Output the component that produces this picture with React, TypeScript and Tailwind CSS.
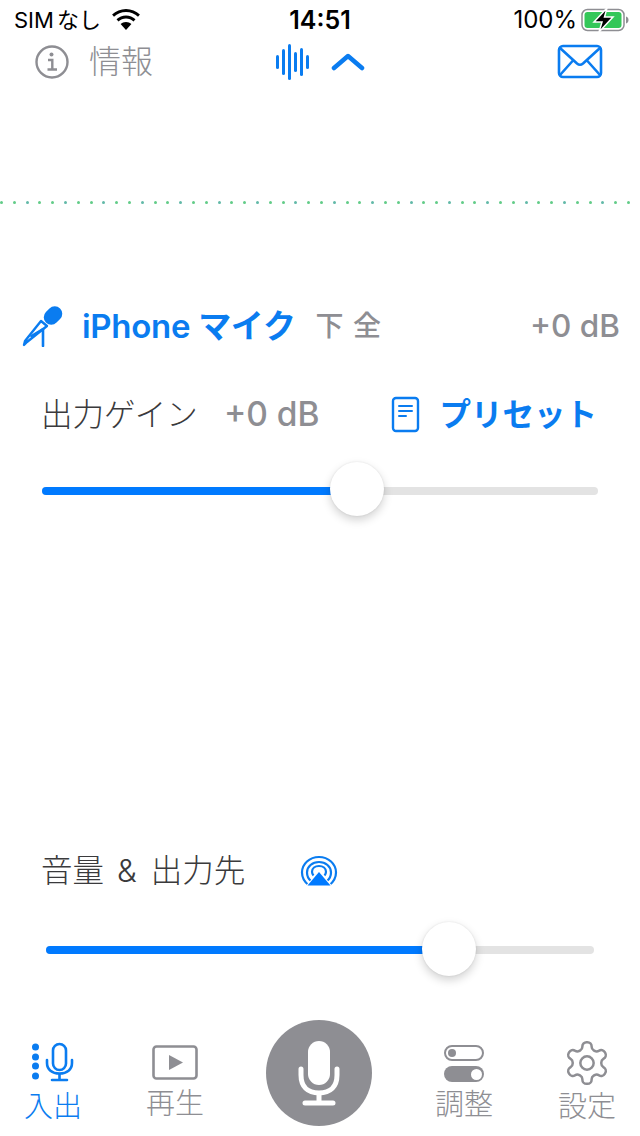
const jp = "font-['Inter','Noto_Sans_CJK_JP',sans-serif]";

function Wifi() {
  return (
    <svg width="30" height="22" viewBox="0 0 30 22" className="fill-black">
      <path d="M15 3c4.600 0 8.800 1.800 12 4.700l1.900-2.100C25.200 2.200 20.300 0 15 0S4.800 2.200 1.100 5.600L3 7.700C6.200 4.800 10.400 3 15 3z" />
      <path d="M15 9.500c2.900 0 5.500 1.100 7.500 2.900l2-2.200C21.900 7.800 18.600 6.400 15 6.400S8.100 7.800 5.500 10.200l2 2.200c2-1.800 4.600-2.900 7.500-2.900z" />
      <path d="M15 13c-2.100 0-4 .8-5.400 2.100L15 21l5.400-5.900C19 13.800 17.100 13 15 13z" />
    </svg>
  );
}

function Battery() {
  return (
    <svg width="48" height="24" viewBox="0 0 48 24" fill="none">
      <rect x="1" y="1.500" width="42" height="21" rx="5.500" stroke="#8e8e93" strokeWidth="1.500" />
      <rect x="3.500" y="4" width="37" height="16" rx="3" fill="#34c759" />
      <path d="M45 8.500c1.600.5 2.500 1.800 2.500 3.500s-.9 3-2.500 3.500z" fill="#8e8e93" />
      <path d="M26 0L13 14h8l-3 10 14-15h-8.500z" fill="#000" stroke="#fff" strokeWidth="1.500" />
    </svg>
  );
}

function Info() {
  return (
    <svg width="36" height="36" viewBox="0 0 36 36" fill="none" stroke="#8e8e93">
      <circle cx="18" cy="18" r="15.500" strokeWidth="2.400" />
      <circle cx="17.500" cy="10.500" r="2" fill="#8e8e93" stroke="none" />
      <path d="M14 16h4.300v9.500M13.500 25.500h9.500" strokeWidth="2.400" />
    </svg>
  );
}

function Waveform() {
  const bars = [14, 26, 36, 20, 28, 14];
  return (
    <div className="flex items-center gap-[3px] h-[38px]">
      {bars.map((h, i) => (
        <div key={i} className="w-[3px] rounded-full bg-[#0a7cf0]" style={{ height: h }} />
      ))}
    </div>
  );
}

function Chevron() {
  return (
    <svg width="34" height="22" viewBox="0 0 34 22" fill="none" stroke="#0a7cf0" strokeWidth="4.500" strokeLinecap="round" strokeLinejoin="round">
      <path d="M3 17L17 5l14 12" />
    </svg>
  );
}

function Mail() {
  return (
    <svg width="46" height="36" viewBox="0 0 46 36" fill="none" stroke="#0a7cf0" strokeWidth="2.600" strokeLinejoin="round">
      <rect x="2" y="2" width="42" height="31" rx="4" />
      <path d="M3 4l17 15.500c1.800 1.500 4.200 1.500 6 0L43 4M3 31l13-14.500M43 31L30 16.500" />
    </svg>
  );
}

function HandMic() {
  return (
    <svg width="42" height="42" viewBox="0 0 42 42" fill="none">
      <rect x="21" y="3" width="20" height="15" rx="7.500" fill="#0a7cf0" transform="rotate(-45 31 10.500)" />
      <path d="M25 21L5 37l-3 3 1-4L19 16z" stroke="#0a7cf0" strokeWidth="2.400" strokeLinejoin="round" />
      <path d="M9.500 31L21 24v17" stroke="#0a7cf0" strokeWidth="2.600" strokeLinecap="round" strokeLinejoin="round" />
    </svg>
  );
}

function Note() {
  return (
    <svg width="30" height="38" viewBox="0 0 30 38" fill="none" stroke="#0a7cf0" strokeWidth="2.400" strokeLinecap="round">
      <rect x="2" y="2" width="25" height="33" rx="3" />
      <path d="M8 10h13M8 15h13M8 20h7" strokeWidth="2" />
    </svg>
  );
}

function AirPlay() {
  return (
    <svg width="38" height="36" viewBox="0 0 38 36" fill="none" stroke="#0a7cf0" strokeWidth="2.200">
      <path d="M8.500 30C4.500 26.800 2 22.300 2 17.500 2 8.900 9.600 2 19 2s17 6.900 17 15.500c0 4.800-2.500 9.300-6.500 12.500" />
      <path d="M11 26c-2.800-2.300-4-5.200-4-8.500C7 11.600 12.400 7 19 7s12 4.600 12 10.500c0 3.300-1.200 6.200-4 8.500" />
      <path d="M13.500 20.500c-.9-1-1.500-2.300-1.500-3.700 0-3.500 3.100-5.800 7-5.800s7 2.300 7 5.800c0 1.400-.6 2.700-1.500 3.700" />
      <path d="M19 17l11.500 13.500h-23z" fill="#007aff" stroke="#fff" strokeWidth="2" paintOrder="stroke" />
    </svg>
  );
}

function Slider({ thumb, top, width, fill }: { thumb: number; top: number; width: string; fill: string }) {
  return (
    <div className={`relative h-[8px] rounded-full bg-[#e3e3e3] ${width}`}>
      <div className={`h-full rounded-l-full bg-[#007aff] ${fill}`} />
      <div
        className="absolute size-[54px] rounded-full bg-white shadow-[0_4px_10px_rgba(0,0,0,0.18),0_0_2px_rgba(0,0,0,0.1)]"
        style={{ left: thumb, top }}
      />
    </div>
  );
}

function DotLine() {
  return (
    <div className="flex gap-[9.800px]">
      {[...Array(50)].map((_, i) => (
        <div key={i} className={`size-[3px] shrink-0 rounded-full ${i % 3 === 2 ? "bg-[#62b9a8]" : "bg-[#62cc88]"}`} />
      ))}
    </div>
  );
}

function TabLabel({ children, active }: { children: string; active?: boolean }) {
  return <div className={`text-[29px] leading-[34px] font-light whitespace-nowrap ${active ? "text-[#0a7cf0]" : "text-[#8e8e93]"}`}>{children}</div>;
}

function TabBar() {
  return (
    <div className="flex items-start h-[116px]">
      <div className="w-[106px] pt-[22px] flex flex-col items-center">
        <svg width="46" height="40" viewBox="0 0 46 40" fill="none" stroke="#0a7cf0" strokeWidth="2.600" strokeLinecap="round" className="mb-[8px]">
          <circle cx="5.500" cy="5" r="3.500" fill="#0a7cf0" stroke="none" />
          <circle cx="5.500" cy="15" r="3.500" fill="#0a7cf0" stroke="none" />
          <circle cx="5.500" cy="24" r="3.500" fill="#0a7cf0" stroke="none" />
          <circle cx="5.500" cy="34" r="3.500" fill="#0a7cf0" stroke="none" />
          <rect x="23" y="2" width="13" height="26" rx="6.500" />
          <path d="M17 18v3c0 6.500 5 10.500 12.500 10.500S42 27.500 42 21v-3M29.500 32v6M22 38h15" />
        </svg>
        <TabLabel active>入出</TabLabel>
      </div>
      <div className="w-[138px] mr-[22px] pt-[25px] flex flex-col items-center">
        <svg width="46" height="36" viewBox="0 0 46 36" fill="none" stroke="#8e8e93" strokeWidth="2.600" className="mb-[6px]">
          <rect x="1.500" y="1.500" width="43" height="32" rx="3" />
          <path d="M17 10l14 7.500L17 25z" fill="#8e8e93" stroke="none" />
        </svg>
        <TabLabel>再生</TabLabel>
      </div>
      <div className="size-[106px] rounded-full bg-[#8e8e93] flex items-center justify-center">
        <svg width="46" height="66" viewBox="0 0 46 66" fill="none" stroke="#fff" strokeWidth="5" strokeLinecap="round">
          <rect x="12" y="1" width="22" height="44" rx="11" fill="#fff" stroke="none" />
          <path d="M5 29v6c0 11.500 6.500 18 18 18s18-6.500 18-18v-6M23 53v10M9 63h28" />
        </svg>
      </div>
      <div className="w-[80px] ml-[52px] pt-[25px] flex flex-col items-center">
        <div className="w-[40px] flex flex-col gap-[5px] mb-[6px]">
          <div className="h-[16px] rounded-full border-[2.500px] border-[#8e8e93] flex items-center pl-[2px]">
            <div className="size-[8px] rounded-full bg-[#8e8e93]" />
          </div>
          <div className="h-[16px] rounded-full bg-[#8e8e93] flex items-center justify-end pr-[2px]">
            <div className="size-[11px] rounded-full bg-white" />
          </div>
        </div>
        <TabLabel>調整</TabLabel>
      </div>
      <div className="w-[72px] ml-[47px] pt-[18px] flex flex-col items-center">
        <svg width="50" height="50" viewBox="0 0 24 24" fill="none" stroke="#8e8e93" strokeWidth="1.200" strokeLinejoin="round" className="mb-[2px]">
          <circle cx="12" cy="12" r="3.200" />
          <path d="M12.220 2h-.44a2 2 0 0 0-2 2v.18a2 2 0 0 1-1 1.730l-.43.250a2 2 0 0 1-2 0l-.150-.080a2 2 0 0 0-2.730.730l-.220.380a2 2 0 0 0 .730 2.730l.150.100a2 2 0 0 1 1 1.720v.510a2 2 0 0 1-1 1.740l-.150.090a2 2 0 0 0-.730 2.730l.220.380a2 2 0 0 0 2.730.730l.150-.080a2 2 0 0 1 2 0l.430.250a2 2 0 0 1 1 1.730V20a2 2 0 0 0 2 2h.44a2 2 0 0 0 2-2v-.18a2 2 0 0 1 1-1.730l.430-.250a2 2 0 0 1 2 0l.150.080a2 2 0 0 0 2.730-.730l.220-.390a2 2 0 0 0-.730-2.730l-.150-.080a2 2 0 0 1-1-1.740v-.500a2 2 0 0 1 1-1.740l.150-.090a2 2 0 0 0 .730-2.730l-.220-.380a2 2 0 0 0-2.730-.730l-.150.080a2 2 0 0 1-2 0l-.430-.250a2 2 0 0 1-1-1.730V4a2 2 0 0 0-2-2z" />
        </svg>
        <TabLabel>設定</TabLabel>
      </div>
    </div>
  );
}

export default function App() {
  return (
    <div className={`w-[640px] h-[1136px] bg-white overflow-hidden flex flex-col ${jp}`}>
      <div className="h-[40px] flex items-center justify-between pl-[14px] pr-[11px] text-[22px] leading-none text-black">
        <div className="flex items-center w-[197px] gap-[10px]">
          <span className="whitespace-nowrap">SIM<span className="ml-[3px]">なし</span></span>
          <Wifi />
        </div>
        <span className="font-semibold text-[25px]">14:51</span>
        <div className="flex items-center w-[200px] justify-end gap-[4px]">
          <span className="text-[24px]">100%</span>
          <Battery />
        </div>
      </div>

      <div className="h-[44px] flex items-center pl-[34px] pr-[37px]">
        <Info />
        <span className="ml-[19px] text-[32px] leading-none text-[#8e8e93] font-light whitespace-nowrap">情報</span>
        <div className="ml-[123px] mr-[192px] flex items-center gap-[22px]">
          <Waveform />
          <Chevron />
        </div>
        <Mail />
      </div>

      <div className="mt-[117px] h-[3px]">
        <DotLine />
      </div>

      <div className="mt-[100px] h-[44px] flex items-center pl-[22px] pr-[20px]">
        <HandMic />
        <span className="ml-[18px] text-[33px] leading-none font-semibold text-[#0a7cf0] tracking-[-0.3px] whitespace-nowrap">iPhone マイク</span>
        <span className="ml-[20px] text-[28px] leading-none font-medium text-[#8e8e93] tracking-[1px] whitespace-nowrap">下 全</span>
        <span className="ml-auto text-[31.5px] leading-none font-medium text-[#8e8e93] whitespace-nowrap">+0 dB</span>
      </div>

      <div className="mt-[45px] h-[44px] flex items-center pl-[41px] pr-[43px]">
        <span className="text-[31.5px] leading-none font-light text-[#3a3a3c] whitespace-nowrap">出力ゲイン</span>
        <span className="ml-[26px] text-[33.5px] leading-none font-medium text-[#8e8e93] whitespace-nowrap">+0 dB</span>
        <span className="ml-auto mr-[18px]"><Note /></span>
        <span className="text-[31.5px] leading-none font-semibold text-[#0a7cf0] whitespace-nowrap">プリセット</span>
      </div>

      <div className="mt-[50px] px-[42px]">
        <Slider thumb={288} top={-25} width="w-[556px]" fill="w-[290px]" />
      </div>

      <div className="mt-[354px] h-[44px] flex items-center pl-[41px]">
        <span className="text-[31.5px] leading-none font-light text-[#3a3a3c] whitespace-nowrap">
          音量<span className="ml-[13px] mr-[14px]">&amp;</span>出力先
        </span>
        <span className="ml-[55px] pt-[3px]"><AirPlay /></span>
      </div>

      <div className="mt-[53px] px-[46px]">
        <Slider thumb={376} top={-24} width="w-[548px]" fill="w-[378px]" />
      </div>

      <div className="mt-auto">
        <TabBar />
      </div>
    </div>
  );
}
